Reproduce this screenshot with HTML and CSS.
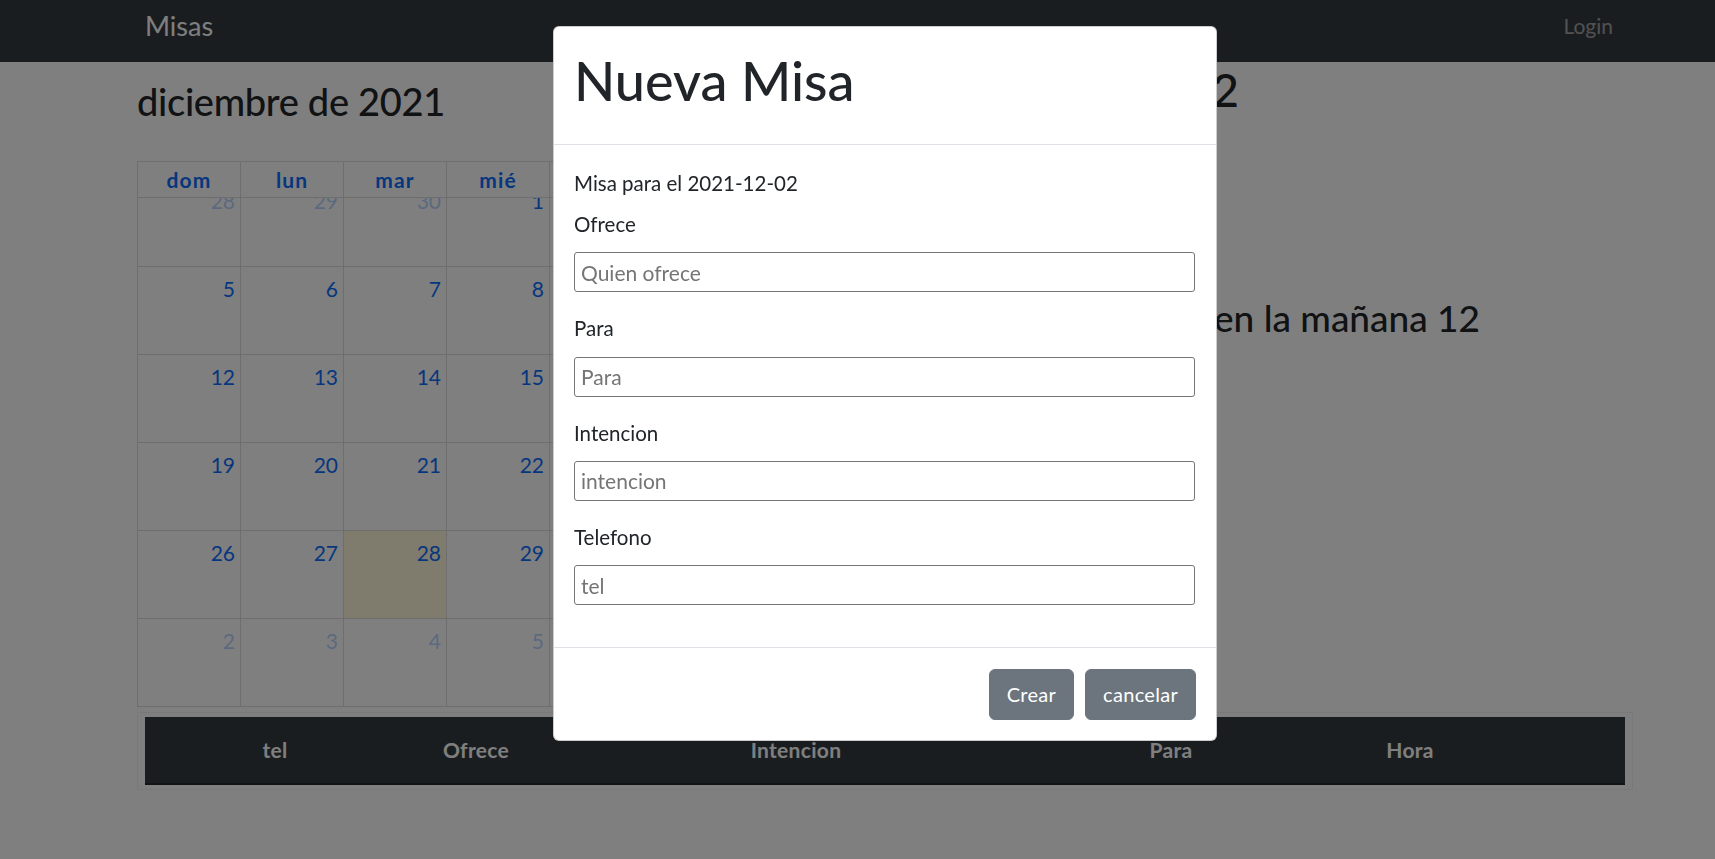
FILE: index.html
```html
<!DOCTYPE html>
<html lang="es">
<head>
<meta charset="utf-8">
<title>Misas</title>
<link rel="stylesheet" href="styles.css">
</head>
<body>
<nav class="navbar">
  <a class="brand" href="#">Misas</a>
  <a class="nav-link" href="#">Login</a>
</nav>

<main class="page">
  <div class="top-row">
    <section class="calendar">
      <h2 class="cal-title">diciembre de 2021</h2>
      <div class="cal">
        <div class="cal-head">
          <div class="hcell"><a href="#">dom</a></div>
          <div class="hcell"><a href="#">lun</a></div>
          <div class="hcell"><a href="#">mar</a></div>
          <div class="hcell"><a href="#">mié</a></div>
          <div class="hcell"><a href="#">jue</a></div>
          <div class="hcell"><a href="#">vie</a></div>
          <div class="hcell"><a href="#">sáb</a></div>
        </div>
        <div class="cal-viewport">
          <div class="cal-grid">
            <div class="day other"><a class="num">28</a></div>
            <div class="day other"><a class="num">29</a></div>
            <div class="day other"><a class="num">30</a></div>
            <div class="day"><a class="num">1</a></div>
            <div class="day"><a class="num">2</a></div>
            <div class="day"><a class="num">3</a></div>
            <div class="day"><a class="num">4</a></div>

            <div class="day"><a class="num">5</a></div>
            <div class="day"><a class="num">6</a></div>
            <div class="day"><a class="num">7</a></div>
            <div class="day"><a class="num">8</a></div>
            <div class="day"><a class="num">9</a></div>
            <div class="day"><a class="num">10</a></div>
            <div class="day"><a class="num">11</a></div>

            <div class="day"><a class="num">12</a></div>
            <div class="day"><a class="num">13</a></div>
            <div class="day"><a class="num">14</a></div>
            <div class="day"><a class="num">15</a></div>
            <div class="day"><a class="num">16</a></div>
            <div class="day"><a class="num">17</a></div>
            <div class="day"><a class="num">18</a></div>

            <div class="day"><a class="num">19</a></div>
            <div class="day"><a class="num">20</a></div>
            <div class="day"><a class="num">21</a></div>
            <div class="day"><a class="num">22</a></div>
            <div class="day"><a class="num">23</a></div>
            <div class="day"><a class="num">24</a></div>
            <div class="day"><a class="num">25</a></div>

            <div class="day"><a class="num">26</a></div>
            <div class="day"><a class="num">27</a></div>
            <div class="day today"><a class="num">28</a></div>
            <div class="day"><a class="num">29</a></div>
            <div class="day"><a class="num">30</a></div>
            <div class="day"><a class="num">31</a></div>
            <div class="day other"><a class="num">1</a></div>

            <div class="day other"><a class="num">2</a></div>
            <div class="day other"><a class="num">3</a></div>
            <div class="day other"><a class="num">4</a></div>
            <div class="day other"><a class="num">5</a></div>
            <div class="day other"><a class="num">6</a></div>
            <div class="day other"><a class="num">7</a></div>
            <div class="day other"><a class="num">8</a></div>
          </div>
        </div>
      </div>
    </section>

    <section class="side">
      <h1 class="side-date">2021-12-02</h1>
      <h2 class="side-sub">Misas en la mañana 12</h2>
    </section>
  </div>

  <div class="records">
    <table class="records-table">
      <colgroup>
        <col class="c-tel">
        <col class="c-ofrece">
        <col class="c-intencion">
        <col class="c-para">
        <col class="c-hora">
        <col class="c-acc">
      </colgroup>
      <thead>
        <tr>
          <th>tel</th>
          <th>Ofrece</th>
          <th>Intencion</th>
          <th>Para</th>
          <th>Hora</th>
          <th></th>
        </tr>
      </thead>
      <tbody></tbody>
    </table>
  </div>
</main>

<div class="backdrop"></div>

<div class="modal">
  <div class="modal-header">
    <h1 class="modal-title">Nueva Misa</h1>
  </div>
  <div class="modal-body">
    <p class="when">Misa para el 2021-12-02</p>
    <div class="field">
      <label for="ofrece">Ofrece</label>
      <input id="ofrece" type="text" placeholder="Quien ofrece">
    </div>
    <div class="field">
      <label for="para">Para</label>
      <input id="para" type="text" placeholder="Para">
    </div>
    <div class="field">
      <label for="intencion">Intencion</label>
      <input id="intencion" type="text" placeholder="intencion">
    </div>
    <div class="field">
      <label for="tel">Telefono</label>
      <input id="tel" type="text" placeholder="tel">
    </div>
  </div>
  <div class="modal-footer">
    <button class="btn">Crear</button>
    <button class="btn">cancelar</button>
  </div>
</div>
</body>
</html>
```

FILE: styles.css
```css
* {
  box-sizing: border-box;
}

html, body {
  margin: 0;
  padding: 0;
}

body {
  font-family: "Lato", "Open Sans", sans-serif;
  font-size: 21px;
  line-height: 1.5;
  color: #212529;
  background: #fff;
  height: 859px;
  overflow: hidden;
}

a {
  text-decoration: none;
}

/* ---------- navbar ---------- */
.navbar {
  height: 62px;
  background: #343a40;
  display: flex;
  justify-content: space-between;
  align-items: flex-start;
  padding: 0 102px 0 145px;
}

.brand {
  color: #fff;
  font-size: 27px;
  line-height: 42px;
  margin-top: 5px;
}

.nav-link {
  color: rgba(255, 255, 255, 0.55);
  font-size: 21px;
  line-height: 31.5px;
  margin-top: 10px;
}

/* ---------- page ---------- */
.page {
  margin-left: 137px;
  width: 1496px;
}

.top-row {
  display: flex;
  align-items: flex-start;
}

.calendar {
  width: 721px;
  flex: none;
}

.cal-title {
  font-size: 38px;
  font-weight: 500;
  line-height: 1.2;
  letter-spacing: -0.3px;
  margin: 17px 0 36.5px;
}

.cal {
  border-top: 1px solid #ddd;
  border-left: 1px solid #ddd;
}

.cal-head {
  display: grid;
  grid-template-columns: repeat(7, 103px);
}

.hcell {
  height: 36px;
  padding: 2px 4px;
  text-align: center;
  border-right: 1px solid #ddd;
  border-bottom: 1px solid #ddd;
  line-height: 31px;
  font-size: 21px;
  font-weight: 700;
  letter-spacing: 1.1px;
}

.hcell a {
  color: #0d6efd;
}

.cal-viewport {
  height: 509px;
  overflow: hidden;
}

.cal-grid {
  margin-top: -19px;
  display: grid;
  grid-template-columns: repeat(7, 103px);
  grid-auto-rows: 88px;
}

.day {
  border-right: 1px solid #ddd;
  border-bottom: 1px solid #ddd;
  padding: 6px 5px 0 0;
  text-align: right;
}

.day .num {
  color: #0d6efd;
  font-size: 21px;
  line-height: 31.5px;
}

.day.other .num {
  opacity: 0.3;
}

.day.today {
  background: rgba(255, 220, 40, 0.17);
}

/* ---------- side column ---------- */
.side {
  flex: 1;
  margin-left: 12px;
}

.side-date {
  width: 369px;
  margin: 0;
  font-size: 46px;
  font-weight: 500;
  line-height: 1.2;
  text-align: right;
}

.side-sub {
  width: 610px;
  margin: 179px 0 0;
  font-size: 37px;
  font-weight: 500;
  line-height: 1.2;
  text-align: right;
}

/* ---------- records table ---------- */
.records {
  margin-top: 5px;
  border: 1px solid #f3f3f3;
  padding: 4px 7px;
}

.records-table {
  width: 100%;
  border-collapse: collapse;
  table-layout: fixed;
}

.c-tel { width: 260px; }
.c-ofrece { width: 142px; }
.c-intencion { width: 498px; }
.c-para { width: 252px; }
.c-hora { width: 226px; }
.c-acc { width: 102px; }

.records-table th {
  background: #343a40;
  color: #fff;
  font-size: 21px;
  font-weight: 700;
  line-height: 31.5px;
  letter-spacing: 0.3px;
  padding: 17px 0;
  text-align: center;
  border-bottom: 2px solid #23272b;
}

/* ---------- modal ---------- */
.backdrop {
  position: fixed;
  inset: 0;
  background: rgba(0, 0, 0, 0.5);
}

.modal {
  position: fixed;
  top: 26px;
  left: 553px;
  width: 664px;
  background: #fff;
  border: 1px solid rgba(0, 0, 0, 0.2);
  border-radius: 6px;
}

.modal-header {
  padding: 22px 21px 30px 20px;
  border-bottom: 1px solid #dee2e6;
}

.modal-title {
  margin: 0;
  font-size: 54px;
  font-weight: 500;
  line-height: 1.2;
}

.modal-body {
  padding: 23px 21px 20.5px 20px;
  font-size: 20.5px;
}

.when {
  margin: 0 0 10.5px;
}

.field {
  margin-bottom: 21px;
}

.field label {
  display: block;
  margin-bottom: 12.5px;
}

.field input {
  display: block;
  width: 100%;
  height: 40px;
  padding: 0 6px;
  border: 1px solid #767676;
  border-radius: 3px;
  font-family: inherit;
  font-size: 21px;
  color: #212529;
  background: #fff;
}

.field input::placeholder {
  color: #757575;
}

.modal-footer {
  display: flex;
  justify-content: flex-end;
  gap: 11px;
  padding: 21px 20px 20px;
  border-top: 1px solid #dee2e6;
}

.btn {
  height: 51px;
  padding: 0 17px;
  font-family: inherit;
  font-size: 20px;
  letter-spacing: 0.3px;
  color: #fff;
  background: #6c757d;
  border: 1px solid #6c757d;
  border-radius: 6px;
}
```
